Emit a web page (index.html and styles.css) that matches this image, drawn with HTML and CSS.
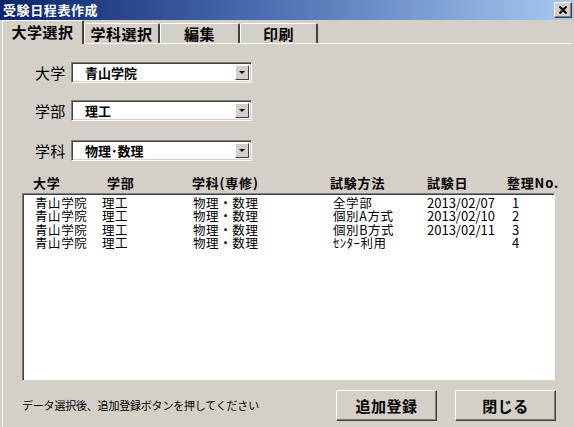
FILE: index.html
```html
<!DOCTYPE html>
<html lang="ja">
<head>
<meta charset="utf-8">
<link rel="stylesheet" href="styles.css">
</head>
<body>
<div class="window">
  <div class="titlebar">
    <span class="title">受験日程表作成</span>
    <span class="close"><svg width="8" height="8" viewBox="0 0 8 8"><path d="M0.5 0.5 L7.5 7.5 M7.5 0.5 L0.5 7.5" stroke="#000" stroke-width="2" fill="none"/></svg></span>
  </div>
  <div class="tabs">
    <div class="tab tab1 active">大学選択</div>
    <div class="tab tab2">学科選択</div>
    <div class="tab tab3">編集</div>
    <div class="tab tab4">印刷</div>
  </div>
  <div class="panel">
    <div class="form">
      <div class="field f1">
        <span class="label">大学</span>
        <div class="combo"><span class="val">青山学院</span><span class="drop"><span class="arrow"></span></span></div>
      </div>
      <div class="field f2">
        <span class="label">学部</span>
        <div class="combo"><span class="val">理工</span><span class="drop"><span class="arrow"></span></span></div>
      </div>
      <div class="field f3">
        <span class="label">学科</span>
        <div class="combo"><span class="val">物理･数理</span><span class="drop"><span class="arrow"></span></span></div>
      </div>
    </div>
    <div class="listhead">
      <span>大学</span><span>学部</span><span>学科(専修)</span><span>試験方法</span><span>試験日</span><span class="no">整理No.</span>
    </div>
    <div class="listbox">
      <div class="row"><span>青山学院</span><span>理工</span><span>物理・数理</span><span>全学部</span><span class="num">2013/02/07</span><span class="num">1</span></div>
      <div class="row"><span>青山学院</span><span>理工</span><span>物理・数理</span><span>個別A方式</span><span class="num">2013/02/10</span><span class="num">2</span></div>
      <div class="row"><span>青山学院</span><span>理工</span><span>物理・数理</span><span>個別B方式</span><span class="num">2013/02/11</span><span class="num">3</span></div>
      <div class="row"><span>青山学院</span><span>理工</span><span>物理・数理</span><span>ｾﾝﾀｰ利用</span><span class="num"></span><span class="num">4</span></div>
    </div>
    <div class="footer">
      <span class="hint">データ選択後、追加登録ボタンを押してください</span>
      <button class="btn add">追加登録</button>
      <button class="btn closebtn">閉じる</button>
    </div>
  </div>
</div>
</body>
</html>
```
FILE: styles.css
```css
* { box-sizing: border-box; }
html, body { margin: 0; padding: 0; }
body {
  width: 574px;
  height: 427px;
  overflow: hidden;
  background: #d4d0c8;
  font-family: "Noto Sans CJK JP", "Noto Sans", sans-serif;
  color: #000;
}
.window { width: 574px; height: 427px; display: flex; flex-direction: column; }

.titlebar {
  height: 20px;
  background: linear-gradient(to right, #0a246a 0%, #4a6cb0 45%, #a6caf0 100%);
  display: flex;
  align-items: center;
  justify-content: space-between;
  padding: 0 2px 0 3px;
}
.title {
  color: #fff;
  font-weight: bold;
  font-size: 13px;
  line-height: 20px;
  letter-spacing: 0.6px;
}
.close {
  width: 18px;
  height: 16px;
  background: #d4d0c8;
  border-top: 1px solid #fff;
  border-left: 1px solid #fff;
  border-right: 1px solid #404040;
  border-bottom: 1px solid #404040;
  box-shadow: inset -1px -1px 0 #808080;
  display: flex;
  align-items: center;
  justify-content: center;
}

.tabs {
  height: 23px;
  display: flex;
  align-items: flex-end;
  padding-left: 2px;
}
.tab {
  height: 20px;
  background: #d4d0c8;
  border-top: 1px solid #fff;
  border-left: 1px solid #fff;
  border-right: 2px solid #404040;
  font-size: 15px;
  font-weight: bold;
  line-height: 19px;
  text-align: center;
  letter-spacing: 0.5px;
  border-radius: 2px 2px 0 0;
}
.tab.active {
  height: 24px;
  margin-bottom: -1px;
  position: relative;
  z-index: 1;
  line-height: 22px;
}
.tab1 { width: 82px; }
.tab2 { width: 76px; }
.tab3 { width: 80px; }
.tab4 { width: 78px; }

.panel {
  flex: 1;
  margin: 0 2px;
  border-top: 1px solid #fff;
  border-left: 1px solid #fff;
  padding: 18px 0 0 19px;
}

.form { padding-left: 12px; }
.field { display: flex; align-items: center; height: 21px; }
.f2 { margin-top: 17px; }
.f3 { margin-top: 19px; }
.label {
  font-size: 15px;
  width: 37px;
  line-height: 21px;
  letter-spacing: 0.3px;
  padding-left: 1px;
}
.combo {
  width: 181px;
  height: 21px;
  background: #fff;
  border-top: 1px solid #808080;
  border-left: 1px solid #808080;
  border-right: 1px solid #fff;
  border-bottom: 1px solid #fff;
  box-shadow: inset 1px 1px 0 #404040, inset -1px -1px 0 #d4d0c8;
  display: flex;
  align-items: center;
  justify-content: space-between;
  padding: 0 2px 0 13px;
}
.val { font-size: 13px; font-weight: bold; line-height: 17px; }
.drop {
  width: 14px;
  height: 15px;
  background: #d4d0c8;
  border-top: 1px solid #fff;
  border-left: 1px solid #fff;
  border-right: 1px solid #404040;
  border-bottom: 1px solid #404040;
  display: flex;
  align-items: center;
  justify-content: center;
}
.arrow {
  width: 0; height: 0;
  border-left: 3px solid transparent;
  border-right: 3px solid transparent;
  border-top: 3px solid #000;
}

.listhead {
  margin-top: 14px;
  height: 15px;
  margin-bottom: 3px;
  display: grid;
  grid-template-columns: 74px 85px 138px 97px 80px 60px;
  padding-left: 11px;
  font-size: 13px;
  font-weight: bold;
  line-height: 15px;
  letter-spacing: 0.8px;
  white-space: nowrap;
}
.listbox {
  width: 533px;
  height: 188px;
  background: #fff;
  border-top: 1px solid #808080;
  border-left: 1px solid #808080;
  border-right: 1px solid #fff;
  border-bottom: 1px solid #d4d0c8;
  box-shadow: inset 1px 1px 0 #404040;
  padding: 2px 0 0 12px;
}
.row {
  display: grid;
  grid-template-columns: 67px 91px 140px 94px 85px 30px;
  font-size: 12.5px;
  line-height: 13.3px;
  height: 13.3px;
  white-space: nowrap;
  letter-spacing: 0.6px;
}
.row .num { letter-spacing: 0; font-size: 13px; }

.footer {
  display: flex;
  align-items: center;
  margin-top: 8px;
  height: 32px;
}
.hint {
  font-size: 11px;
  width: 314px;
  letter-spacing: -0.2px;
  white-space: nowrap;
}
.btn {
  width: 101px;
  height: 31px;
  padding: 0;
  margin: 0;
  background: #d4d0c8;
  border-top: 1px solid #fff;
  border-left: 1px solid #fff;
  border-right: 1px solid #404040;
  border-bottom: 1px solid #404040;
  box-shadow: inset -1px -1px 0 #808080;
  font-family: "Noto Sans CJK JP", sans-serif;
  font-size: 15px;
  font-weight: bold;
  color: #000;
  letter-spacing: 0.5px;
}
.closebtn { margin-left: 18px; }
```
